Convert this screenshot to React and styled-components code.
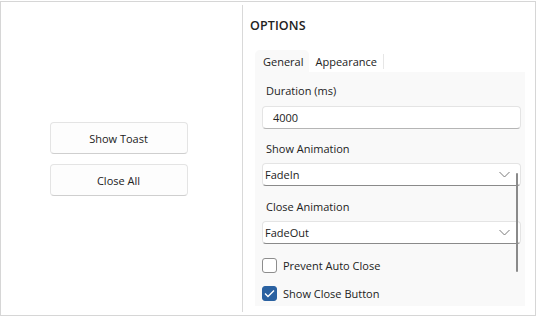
import React from "react";
import styled, { createGlobalStyle } from "styled-components";

const GlobalStyle = createGlobalStyle`
  html, body { margin: 0; padding: 0; background: #ffffff; }
  body {
    font-family: "Open Sans", "Noto Sans", Arial, sans-serif;
    font-size: 11px;
    color: #222222;
  }
  * { box-sizing: border-box; }
`;

const Frame = styled.div`
  margin-top: 1px;
  width: 536px;
  height: 315px;
  border: 1px solid #d6d6d6;
  display: flex;
`;

const LeftPane = styled.div`
  width: 241px;
  flex: none;
  display: flex;
  flex-direction: column;
  align-items: center;
  justify-content: center;
  gap: 10px;
  padding-right: 6px;
  padding-top: 1px;
`;

const Button = styled.button`
  width: 138px;
  height: 32px;
  font: inherit;
  color: #222222;
  background: #fdfdfd;
  border: 1px solid #e4e4e4;
  border-bottom-color: #cfcfcf;
  border-radius: 4px;
  padding: 0;
`;

const Divider = styled.div`
  width: 1px;
  flex: none;
  background: #d9d9d9;
  margin: 3px 0 3px;
`;

const RightPane = styled.div`
  flex: 1;
  display: flex;
  flex-direction: column;
  padding: 15px 9px 0 7px;
`;

const Heading = styled.div`
  font-size: 12.5px;
  font-weight: 600;
  line-height: 18px;
  letter-spacing: 0.1px;
`;

const Tabs = styled.div`
  margin: 15px 0 0 5px;
  display: flex;
  flex-direction: column;
`;

const TabStrip = styled.div`
  display: flex;
  height: 22px;
`;

const Tab = styled.div`
  display: flex;
  align-items: center;
  padding: ${(p) => (p.$active ? "0 6px 0 8px" : "0 7px 0 6px")};
  background: ${(p) => (p.$active ? "#f9f9f9" : "transparent")};
  border-radius: 5px 5px 0 0;
  position: relative;
  ${(p) =>
    p.$separator &&
    `&::after {
      content: "";
      position: absolute;
      right: 0;
      top: 4px;
      bottom: 3px;
      width: 1px;
      background: #e6e6e6;
    }`}
`;

const Panel = styled.div`
  position: relative;
  background: #f9f9f9;
  height: 234px;
  margin-right: 1px;
  padding: 11px 5px 0 7px;
  display: flex;
  flex-direction: column;
`;

const FieldLabel = styled.div`
  line-height: 16px;
  padding-left: 4px;
  margin-top: ${(p) => p.$mt || 0}px;
`;

const Input = styled.div`
  height: 23px;
  margin-top: ${(p) => p.$mt || 0}px;
  margin-right: -1px;
  background: #ffffff;
  border: 1px solid #e4e4e4;
  border-bottom-color: ${(p) => (p.$dark ? "#8a8a8a" : "#b5b5b5")};
  border-radius: 4px;
  display: flex;
  align-items: center;
  justify-content: space-between;
  padding: 0 10px 0 ${(p) => p.$pl}px;
`;

const Chevron = styled.svg`
  width: 11px;
  height: 7px;
  flex: none;
`;

const CheckRow = styled.div`
  display: flex;
  align-items: center;
  gap: 6px;
  height: 16px;
  margin-top: ${(p) => p.$mt || 0}px;
`;

const Box = styled.span`
  width: 15px;
  height: 15px;
  border-radius: 3px;
  border: 1px solid ${(p) => (p.$checked ? "#2a61a1" : "#8d8d8d")};
  background: ${(p) => (p.$checked ? "#2a61a1" : "#ffffff")};
  display: flex;
  align-items: center;
  justify-content: center;
`;

const ScrollThumb = styled.div`
  position: absolute;
  left: 261px;
  top: 101px;
  width: 2px;
  height: 99px;
  background: #8a8a8a;
  border-radius: 1px;
`;

function Dropdown({ value }) {
  return (
    <Input $pl={2} $dark $mt={6}>
      <span>{value}</span>
      <Chevron viewBox="0 0 11 7">
        <path d="M0.5 1 L5.5 6 L10.5 1" fill="none" stroke="#7a7a7a" strokeWidth="1" />
      </Chevron>
    </Input>
  );
}

export default function App() {
  return (
    <>
      <GlobalStyle />
      <Frame>
        <LeftPane>
          <Button>Show Toast</Button>
          <Button>Close All</Button>
        </LeftPane>
        <Divider />
        <RightPane>
          <Heading>OPTIONS</Heading>
          <Tabs>
            <TabStrip>
              <Tab $active>General</Tab>
              <Tab $separator>Appearance</Tab>
            </TabStrip>
            <Panel>
              <FieldLabel>Duration (ms)</FieldLabel>
              <Input $pl={10} $mt={7}>
                <span>4000</span>
              </Input>
              <FieldLabel $mt={12}>Show Animation</FieldLabel>
              <Dropdown value="FadeIn" />
              <FieldLabel $mt={13}>Close Animation</FieldLabel>
              <Dropdown value="FadeOut" />
              <CheckRow $mt={13}>
                <Box />
                <span>Prevent Auto Close</span>
              </CheckRow>
              <CheckRow $mt={12}>
                <Box $checked>
                  <svg width="11" height="9" viewBox="0 0 11 9">
                    <path d="M1 4.5 L4 7.5 L10 1.5" fill="none" stroke="#ffffff" strokeWidth="1.4" />
                  </svg>
                </Box>
                <span>Show Close Button</span>
              </CheckRow>
              <ScrollThumb />
            </Panel>
          </Tabs>
        </RightPane>
      </Frame>
    </>
  );
}
